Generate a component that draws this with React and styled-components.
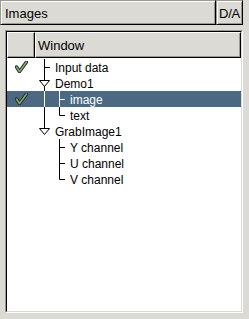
import React from "react";
import styled, { createGlobalStyle } from "styled-components";

const GlobalStyle = createGlobalStyle`
  html, body {
    margin: 0;
    padding: 0;
    background: #dcdad5;
  }
  body {
    font-family: "Liberation Sans", Arial, sans-serif;
    font-size: 12px;
    color: #000;
  }
`;

const rows = [
  { label: "Input data", level: 0, checked: true },
  { label: "Demo1", level: 0, expander: true },
  { label: "image", level: 1, checked: true, selected: true },
  { label: "text", level: 1, last: true },
  { label: "GrabImage1", level: 0, expander: true, last: true },
  { label: "Y channel", level: 1, parentLast: true },
  { label: "U channel", level: 1, parentLast: true },
  { label: "V channel", level: 1, last: true, parentLast: true },
];

function CheckMark() {
  return (
    <svg width="13" height="12" viewBox="0 0 13 12">
      <path d="M1.5 6 L4.5 10.5 L11.5 1" fill="none" stroke="#1f2a1a" strokeWidth="3.4" strokeLinejoin="round" strokeLinecap="round" />
      <path d="M1.5 6 L4.5 10.5 L11.5 1" fill="none" stroke="#86ab74" strokeWidth="1.5" strokeLinejoin="round" strokeLinecap="round" />
    </svg>
  );
}

function Guides({ row }) {
  const col = row.selected ? "#fff" : "#000";
  const w = row.level === 0 ? 20 : 35;
  const mid = 8.5;
  return (
    <svg width={w} height="16" viewBox={`0 0 ${w} 16`} style={{ flex: "none" }}>
      {row.level === 0 && (
        <>
          <line x1="9.5" y1="0" x2="9.5" y2={row.last ? mid : 16} stroke={col} />
          {row.expander ? (
            <polygon points="4.5,5.5 14.5,5.5 9.5,11.5" fill="#fff" stroke={col} />
          ) : (
            <line x1="9.5" y1={mid} x2="15" y2={mid} stroke={col} />
          )}
        </>
      )}
      {row.level === 1 && (
        <>
          {!row.parentLast && <line x1="9.5" y1="0" x2="9.5" y2="16" stroke={col} />}
          <line x1="24.5" y1="0" x2="24.5" y2={row.last ? mid : 16} stroke={col} />
          <line x1="24.5" y1={mid} x2="30" y2={mid} stroke={col} />
        </>
      )}
    </svg>
  );
}

export default function App() {
  return (
    <>
      <GlobalStyle />
      <Page>
        <TitleBar>
          <TitleButton>Images</TitleButton>
          <ModeButton>D/A</ModeButton>
        </TitleBar>
        <Frame>
          <Inner>
            <HeaderRow>
              <HeaderCell $w="28px" />
              <HeaderCell $grow>Window</HeaderCell>
            </HeaderRow>
            <Body>
              {rows.map((r) => (
                <Row key={r.label} $selected={r.selected}>
                  <CheckCell>{r.checked && <CheckMark />}</CheckCell>
                  <Guides row={r} />
                  <Label>{r.label}</Label>
                </Row>
              ))}
            </Body>
          </Inner>
        </Frame>
      </Page>
    </>
  );
}

const Page = styled.div`
  width: 249px;
  height: 319px;
  display: flex;
  flex-direction: column;
`;

const TitleBar = styled.div`
  display: flex;
  height: 25px;
  margin-right: 6px;
`;

const TitleButton = styled.div`
  flex: 1;
  display: flex;
  align-items: center;
  padding: 1px 0 0 4px;
  border: 1px solid;
  border-color: #9e9a91 #000 #000 #9e9a91;
  box-shadow: inset 1px 1px #fff, inset -1px -1px #9e9a91;
  font-size: 13px;
`;

const ModeButton = styled(TitleButton)`
  flex: none;
  width: 27px;
  padding-left: 0;
  justify-content: center;
  box-sizing: border-box;
  letter-spacing: -0.3px;
`;

const Frame = styled.div`
  margin: 5px 6px 6px 5px;
  flex: 1;
  border: 1px solid;
  border-color: #9e9a91 #fff #fff #9e9a91;
  display: flex;
`;

const Inner = styled.div`
  flex: 1;
  background: #fff;
  border: 1px solid;
  border-color: #000 #dcdad5 #dcdad5 #000;
`;

const HeaderRow = styled.div`
  display: flex;
  height: 26px;
`;

const HeaderCell = styled.div`
  box-sizing: border-box;
  width: ${(p) => p.$w || "auto"};
  flex: ${(p) => (p.$grow ? 1 : "none")};
  background: #dcdad5;
  border: 1px solid;
  border-color: #fff #000 #000 #fff;
  box-shadow: inset -1px -1px #9e9a91;
  display: flex;
  align-items: center;
  padding-left: 2px;
  font-size: 13px;
`;

const Body = styled.div`
  padding-top: 1px;
`;

const Row = styled.div`
  display: flex;
  align-items: center;
  height: 16px;
  background: ${(p) => (p.$selected ? "#4b6983" : "transparent")};
  color: ${(p) => (p.$selected ? "#fff" : "#000")};
`;

const CheckCell = styled.div`
  width: 28px;
  height: 16px;
  flex: none;
  display: flex;
  align-items: center;
  justify-content: center;
`;

const Label = styled.span`
  white-space: nowrap;
  line-height: 16px;
  padding-top: 1px;
`;
